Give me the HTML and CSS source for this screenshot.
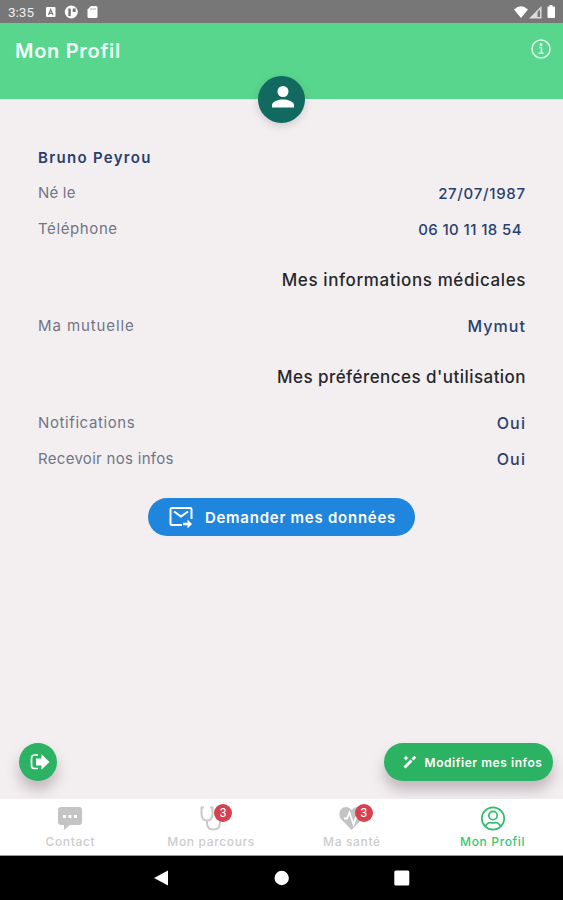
FILE: index.html
```
<!DOCTYPE html>
<html lang="fr">

<head>
	<meta charset="UTF-8">
	<meta name="viewport" content="width=device-width, initial-scale=1.0">
	<title>Mon Profil</title>
	<link rel="stylesheet" href="styles.css">
</head>

<body>
	<div class="status-bar">
		<span class="clock">3:35</span>
		<svg class="status-left" width="56" height="14" viewBox="0 0 56 14">
			<rect x="1" y="2" width="9.500" height="10" rx="1" fill="#fff"/>
			<path d="M3.500 10 5.700 4.500 8 10M4.300 8.300h2.800" fill="none" stroke="#777" stroke-width="1.200"/>
			<circle cx="26.300" cy="7" r="6.500" fill="#fff"/>
			<path d="M23.300 3.500h2.500v7.500h-2.500zM27.700 3.500h3v3.500h-3z" fill="#777"/>
			<path d="M46 1h5q1.500 0 1.500 1.500v9q0 1.500-1.500 1.500h-7q-1.500 0-1.500-1.500V4.500z" fill="#fff"/>
			<path d="M46 3v2M48 3v2M50 3v2" stroke="#999" stroke-width=".8"/>
		</svg>
		<svg class="status-right" width="44" height="14" viewBox="0 0 44 14">
			<path d="M2 4.500Q9-2 16 4.500L9 13z" fill="#fff"/>
			<path d="M17 13.500 29.500 1v12.500z" fill="#ddd"/>
			<path d="M25.500 7v5h2.500V4.500z" fill="#777"/>
			<path d="M36 1.500h1.500V0h3v1.500H42q1 0 1 1V12q0 1-1 1h-5.500q-1 0-1-1V2.500q0-1 .5-1z" fill="#fff"/>
		</svg>
	</div>

	<header class="header">
		<h1>Mon Profil</h1>
		<svg class="info-icon" width="20" height="20" viewBox="0 0 20 20" fill="none" stroke="#d9fbe6" stroke-width="1.600">
			<circle cx="10" cy="10" r="9"/>
			<path d="M8 8.500h2.500V14M7.500 14.300h5"/>
			<circle cx="10" cy="5.500" r=".7" fill="#d9fbe6"/>
		</svg>
		<div class="avatar">
			<svg width="24" height="24" viewBox="0 0 24 24" fill="#fff">
				<circle cx="12" cy="6.500" r="5.500"/>
				<path d="M1 22.500V20c0-3.500 6.500-5.500 11-5.500s11 2 11 5.500v2.500z"/>
			</svg>
		</div>
	</header>

	<main class="profile">
		<div class="row"><span class="name">Bruno Peyrou</span></div>
		<div class="row"><span class="label l-ne">Né le</span><span class="value v-date">27/07/1987</span></div>
		<div class="row"><span class="label l-tel">Téléphone</span><span class="value v-tel">06 10 11 18 54</span></div>

		<h2 class="t-med">Mes informations médicales</h2>
		<div class="row"><span class="label l-mut">Ma mutuelle</span><span class="value v-mut">Mymut</span></div>

		<h2 class="t-pref">Mes préférences d'utilisation</h2>
		<div class="row"><span class="label l-notif">Notifications</span><span class="value v-oui">Oui</span></div>
		<div class="row"><span class="label l-infos">Recevoir nos infos</span><span class="value v-oui">Oui</span></div>

		<button class="btn btn-data">
			<svg width="24" height="22" viewBox="0 0 24 22" fill="none" stroke="#fff" stroke-width="2">
				<path d="M13 19H3q-1.500 0-1.500-1.500V3.500Q1.500 2 3 2h18q1.500 0 1.500 1.500V13"/>
				<path d="m5 5.500 7 5 7-5"/>
				<path d="M14 18H20" stroke-width="2.500"/>
				<path d="m18.500 13.500 4.500 4.500-4.500 4.500z" fill="#fff" stroke="none"/>
			</svg>
			<span>Demander mes données</span>
		</button>

		<div class="actions">
			<button class="btn btn-logout">
				<svg width="20" height="18" viewBox="0 0 20 18">
					<path d="M8 2H4.500Q1.500 2 1.500 5v7.500q0 3 3 3H8" fill="none" stroke="#fff" stroke-width="1.700"/>
					<path d="M6 5.500h5.500V1.200L19.500 9l-8 7.700v-4.200H6z" fill="#fff"/>
				</svg>
			</button>
			<button class="btn btn-edit">
				<svg width="14" height="14" viewBox="0 0 14 14">
					<path d="m1.500 12.500 7-7" stroke="#fff" stroke-width="2.800"/>
					<path d="m9.500 4.500 2.800-2.800" stroke="#fff" stroke-width="2.800"/>
					<path d="m3 .3.900 1.900 1.900.9-1.900.9L3 5.900l-.9-1.900-1.900-.9 1.900-.9z" fill="#fff"/>
				</svg>
				<span>Modifier mes infos</span>
			</button>
		</div>
	</main>

	<nav class="tabs">
		<div class="tab">
			<div class="tab-icon">
				<svg width="26" height="26" viewBox="0 0 26 26">
					<path d="M4 2h18q3 0 3 3v12q0 3-3 3H13l-6 5v-5H4q-3 0-3-3V5q0-3 3-3z" fill="#c4c4c4"/>
					<path d="M6 10h3v3H6zM11.500 10h3v3h-3zM17 10h3v3h-3z" fill="#fff"/>
				</svg>
			</div>
			<span class="tab-contact">Contact</span>
		</div>
		<div class="tab">
			<div class="tab-icon">
				<svg width="26" height="26" viewBox="0 0 26 26" fill="none" stroke="#c9c9c9" stroke-width="2">
					<path d="M6 2.500H3.500v6q0 7 5.500 7t5.500-7v-6H12"/>
					<path d="M9 15v3q0 6.500 6.500 6.500T22 18v-4"/>
				</svg>
				<span class="badge">3</span>
			</div>
			<span class="tab-parcours">Mon parcours</span>
		</div>
		<div class="tab">
			<div class="tab-icon">
				<svg width="26" height="26" viewBox="0 0 26 26">
					<path d="M12.500 25 1.500 13.500C-1 9 1 2 7 2q3.500 0 5.500 3Q15 2 18 2c6 0 8 7 6 11z" fill="#c4c4c4"/>
					<path d="M5 13.500h3l2.500-6 4 12 2.500-7h8" fill="none" stroke="#fff" stroke-width="1.800"/>
				</svg>
				<span class="badge">3</span>
			</div>
			<span class="tab-sante">Ma santé</span>
		</div>
		<div class="tab active">
			<div class="tab-icon">
				<svg width="26" height="26" viewBox="0 0 26 26" fill="none" stroke="#32bd6d" stroke-width="1.700">
					<circle cx="13" cy="13.500" r="11.200"/>
					<circle cx="13" cy="10.500" r="4.200"/>
					<path d="M5.500 21q2-3.500 5-3.500 2.500 1 5 0 3 0 5 3.500"/>
				</svg>
			</div>
			<span class="tab-profil">Mon Profil</span>
		</div>
	</nav>

	<div class="android-nav">
		<svg width="16" height="16" viewBox="0 0 16 16"><path d="M0 8 14 .5v15z" fill="#fff"/></svg>
		<svg width="16" height="16" viewBox="0 0 16 16"><circle cx="7.700" cy="8" r="7.200" fill="#fff"/></svg>
		<svg width="16" height="16" viewBox="0 0 16 16"><rect x=".3" y=".5" width="15" height="15" rx="1.500" fill="#fff"/></svg>
	</div>
</body>

</html>
```
FILE: styles.css
```
* {
	margin: 0;
	padding: 0;
	box-sizing: border-box;
}

body {
	font-family: Inter, "Open Sans", sans-serif;
	background: #f3eff1;
	height: 900px;
	display: flex;
	flex-direction: column;
	overflow: hidden;
}

svg {
	display: block;
	flex: none;
}

/* top bars */
.status-bar {
	height: 23px;
	background: #777;
	display: flex;
	align-items: center;
	padding: 1px 7px 0 8px;
}

.clock {
	width: 37px;
	font: 13.5px Roboto, sans-serif;
	color: #eee;
}

.status-right {
	margin-left: auto;
}

.header {
	position: relative;
	height: 76px;
	background: #58d68d;
	display: flex;
	justify-content: space-between;
	align-items: flex-start;
	padding: 16px 12px 0 15px;
}

.header h1 {
	font-size: 20px;
	line-height: 24px;
	font-weight: 600;
	letter-spacing: 0.7px;
	color: #f2fff6;
}

.avatar {
	position: absolute;
	left: 258px;
	bottom: -24px;
	width: 47px;
	height: 47px;
	border-radius: 50%;
	background: #12695f;
	box-shadow: 0 3px 9px rgba(60, 40, 50, 0.18);
	display: flex;
	justify-content: center;
	padding: 9px 0 0 2px;
}

/* profile details */
.profile {
	flex: 1;
	display: flex;
	flex-direction: column;
	padding: 40px 10px 18px 19px;
}

.row {
	display: flex;
	justify-content: space-between;
	align-items: center;
	height: 36px;
	padding: 0 28px 0 19px;
	font-size: 15px;
	white-space: nowrap;
}

.name {
	font-weight: 600;
	letter-spacing: 1.3px;
	color: #29406f;
}

.label {
	color: #717587;
	padding-bottom: 1px;
}

.l-ne {
	letter-spacing: 0.2px;
}

.l-tel {
	letter-spacing: 0.6px;
}

.l-mut {
	letter-spacing: 0.9px;
}

.l-notif {
	letter-spacing: 0.6px;
}

.l-infos {
	letter-spacing: 0.3px;
}

.value {
	font-weight: 500;
	color: #29406f;
	padding-top: 1px;
}

.v-date {
	letter-spacing: 0.7px;
	margin-right: -0.7px;
}

.v-tel {
	letter-spacing: 0.4px;
	padding-right: 3px;
}

.v-mut {
	font-size: 16px;
	letter-spacing: 1.1px;
	margin-right: -1.1px;
	padding: 0 0 1px;
}

.v-oui {
	font-size: 16px;
	letter-spacing: 1.2px;
	margin-right: -1.2px;
	padding: 0 0 1px;
}

.profile h2 {
	height: 36px;
	margin: 15px 27px 10px 0;
	line-height: 37px;
	text-align: right;
	font-size: 17px;
	font-weight: 500;
	color: #26282b;
}

.profile .t-med {
	letter-spacing: 0.6px;
}

.profile .t-pref {
	letter-spacing: 0.45px;
}

/* buttons */
.btn {
	border: none;
	display: flex;
	align-items: center;
	justify-content: center;
	height: 38px;
	border-radius: 19px;
	font-family: inherit;
	color: #fff;
	white-space: nowrap;
}

.btn-data {
	width: 267px;
	margin: 21px 0 0 129px;
	padding-left: 2px;
	gap: 12px;
	background: #2085dc;
	font-size: 15px;
	font-weight: 600;
	letter-spacing: 0.75px;
}

.actions {
	margin-top: auto;
	display: flex;
	justify-content: space-between;
}

.btn-logout,
.btn-edit {
	background: #2bb262;
	box-shadow: 0 9px 14px rgba(60, 40, 50, 0.28);
}

.btn-logout {
	width: 38px;
	padding-left: 3px;
}

.btn-edit {
	width: 169px;
	gap: 8px;
	padding-left: 8px;
	font-size: 12px;
	font-weight: 600;
	letter-spacing: 0.55px;
}

/* bottom tabs */
.tabs {
	height: 57px;
	background: #fff;
	border-bottom: 1px solid #999;
	display: flex;
}

.tab {
	flex: 1;
	display: flex;
	flex-direction: column;
	align-items: center;
	padding-top: 6px;
	font-size: 12px;
	line-height: 16px;
	font-weight: 500;
	letter-spacing: 0.65px;
	color: #ccc;
}

.tab.active {
	color: #35c774;
}

.tab-icon {
	position: relative;
	margin-bottom: 3px;
}

.badge {
	position: absolute;
	left: 16px;
	top: -1px;
	width: 18px;
	height: 18px;
	border-radius: 50%;
	background: #d5424f;
	color: #fff;
	font: 12px/18px Roboto, sans-serif;
	letter-spacing: 0;
	text-align: center;
}

.android-nav {
	height: 44px;
	background: #000;
	display: flex;
	justify-content: center;
	align-items: center;
	gap: 104px;
}
```
